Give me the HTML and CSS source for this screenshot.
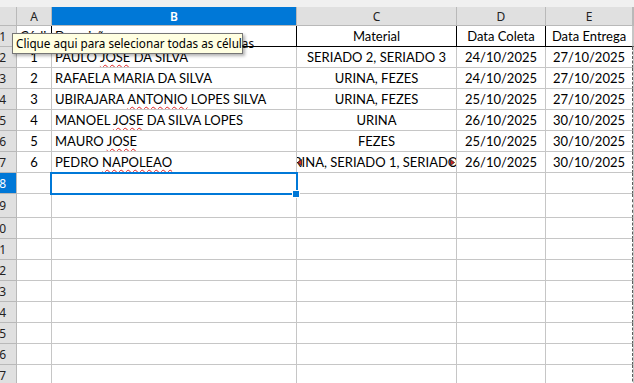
FILE: index.html
```html
<!DOCTYPE html>
<html lang="pt-BR">
<head>
  <meta charset="UTF-8">
  <title>Planilha - Coletas</title>
  <link rel="stylesheet" href="styles.css">
</head>
<body>
  <div class="sheet">
    <!-- faixa da barra de fórmulas -->
    <div class="strip"></div>

    <!-- Cabeçalho das colunas -->
    <div class="row head">
      <div class="cell corner"></div>
      <div class="cell col">A</div>
      <div class="cell col active">B</div>
      <div class="cell col">C</div>
      <div class="cell col">D</div>
      <div class="cell col">E</div>
      <div class="cell col"></div>
    </div>

    <!-- Linha 1: títulos -->
    <div class="row title">
      <div class="cell rh"><span>1</span></div>
      <div class="cell left"><span>Código</span></div>
      <div class="cell left"><span>Descrição</span></div>
      <div class="cell center"><span>Material</span></div>
      <div class="cell center"><span>Data Coleta</span></div>
      <div class="cell center"><span>Data Entrega</span></div>
      <div class="cell"></div>
    </div>

    <div class="row">
      <div class="cell rh"><span>2</span></div>
      <div class="cell center"><span>1</span></div>
      <div class="cell left"><span>PAULO <span class="typo">JOSE</span> DA SILVA</span></div>
      <div class="cell center"><span>SERIADO 2, SERIADO 3</span></div>
      <div class="cell center"><span>24/10/2025</span></div>
      <div class="cell center page"><span>27/10/2025</span></div>
      <div class="cell"></div>
    </div>
    <div class="row">
      <div class="cell rh"><span>3</span></div>
      <div class="cell center"><span>2</span></div>
      <div class="cell left"><span>RAFAELA MARIA DA SILVA</span></div>
      <div class="cell center"><span>URINA, FEZES</span></div>
      <div class="cell center"><span>24/10/2025</span></div>
      <div class="cell center page"><span>27/10/2025</span></div>
      <div class="cell"></div>
    </div>
    <div class="row">
      <div class="cell rh"><span>4</span></div>
      <div class="cell center"><span>3</span></div>
      <div class="cell left"><span>UBIRAJARA <span class="typo">ANTONIO</span> LOPES SILVA</span></div>
      <div class="cell center"><span>URINA, FEZES</span></div>
      <div class="cell center"><span>25/10/2025</span></div>
      <div class="cell center page"><span>27/10/2025</span></div>
      <div class="cell"></div>
    </div>
    <div class="row">
      <div class="cell rh"><span>5</span></div>
      <div class="cell center"><span>4</span></div>
      <div class="cell left"><span>MANOEL <span class="typo">JOSE</span> DA SILVA LOPES</span></div>
      <div class="cell center"><span>URINA</span></div>
      <div class="cell center"><span>26/10/2025</span></div>
      <div class="cell center page"><span>30/10/2025</span></div>
      <div class="cell"></div>
    </div>
    <div class="row">
      <div class="cell rh"><span>6</span></div>
      <div class="cell center"><span>5</span></div>
      <div class="cell left"><span>MAURO <span class="typo">JOSE</span></span></div>
      <div class="cell center"><span>FEZES</span></div>
      <div class="cell center"><span>25/10/2025</span></div>
      <div class="cell center page"><span>30/10/2025</span></div>
      <div class="cell"></div>
    </div>
    <div class="row">
      <div class="cell rh"><span>7</span></div>
      <div class="cell center"><span>6</span></div>
      <div class="cell left"><span>PEDRO <span class="typo">NAPOLEAO</span></span></div>
      <div class="cell center clipped">
        <span class="overflow">URINA, SERIADO 1, SERIADO 2</span>
        <svg class="arrow arrow-left" width="5" height="7" viewBox="0 0 5 7"><path d="M4.5 0.5 L0.5 3.5 L4.5 6.5 Z" fill="#d42020" stroke="#222" stroke-width="0.8"/></svg>
        <svg class="arrow arrow-right" width="5" height="7" viewBox="0 0 5 7"><path d="M0.5 0.5 L4.5 3.5 L0.5 6.5 Z" fill="#d42020" stroke="#222" stroke-width="0.8"/></svg>
      </div>
      <div class="cell center"><span>26/10/2025</span></div>
      <div class="cell center page"><span>30/10/2025</span></div>
      <div class="cell"></div>
    </div>
    <div class="row">
      <div class="cell rh active"><span>8</span></div>
      <div class="cell"></div>
      <div class="cell current"><div class="selection"><div class="handle"></div></div></div>
      <div class="cell"></div>
      <div class="cell"></div>
      <div class="cell page"></div>
      <div class="cell"></div>
    </div>
    <div class="row tall">
      <div class="cell rh"><span>9</span></div>
      <div class="cell"></div><div class="cell"></div><div class="cell"></div><div class="cell"></div><div class="cell page"></div><div class="cell"></div>
    </div>
    <div class="row">
      <div class="cell rh"><span>10</span></div>
      <div class="cell"></div><div class="cell"></div><div class="cell"></div><div class="cell"></div><div class="cell page"></div><div class="cell"></div>
    </div>
    <div class="row">
      <div class="cell rh"><span>11</span></div>
      <div class="cell"></div><div class="cell"></div><div class="cell"></div><div class="cell"></div><div class="cell page"></div><div class="cell"></div>
    </div>
    <div class="row">
      <div class="cell rh"><span>12</span></div>
      <div class="cell"></div><div class="cell"></div><div class="cell"></div><div class="cell"></div><div class="cell page"></div><div class="cell"></div>
    </div>
    <div class="row">
      <div class="cell rh"><span>13</span></div>
      <div class="cell"></div><div class="cell"></div><div class="cell"></div><div class="cell"></div><div class="cell page"></div><div class="cell"></div>
    </div>
    <div class="row">
      <div class="cell rh"><span>14</span></div>
      <div class="cell"></div><div class="cell"></div><div class="cell"></div><div class="cell"></div><div class="cell page"></div><div class="cell"></div>
    </div>
    <div class="row">
      <div class="cell rh"><span>15</span></div>
      <div class="cell"></div><div class="cell"></div><div class="cell"></div><div class="cell"></div><div class="cell page"></div><div class="cell"></div>
    </div>
    <div class="row">
      <div class="cell rh"><span>16</span></div>
      <div class="cell"></div><div class="cell"></div><div class="cell"></div><div class="cell"></div><div class="cell page"></div><div class="cell"></div>
    </div>
    <div class="row">
      <div class="cell rh"><span>17</span></div>
      <div class="cell"></div><div class="cell"></div><div class="cell"></div><div class="cell"></div><div class="cell page"></div><div class="cell"></div>
    </div>

    <!-- Dica do canto superior esquerdo -->
    <div class="tooltip">Clique aqui para selecionar todas as células</div>
  </div>
</body>
</html>
```

FILE: styles.css
```css
/* Reset */
* {
  margin: 0;
  padding: 0;
  box-sizing: border-box;
}
html, body {
  width: 100%;
  height: 100%;
  background: #fff;
  overflow: hidden;
}
/* Planilha */
.sheet {
  position: relative;
  font-family: 'Lato', 'Liberation Sans', sans-serif;
  font-size: 13px;
  color: #000;
}
.strip {
  height: 7px;
  background: #f0f0f0;
}
.row {
  display: grid;
  grid-template-columns: 17px 35px 245px 160px 89px 87px 1fr;
  height: 21px;
}
.row.tall {
  height: 24px;
}
.cell {
  position: relative;
  display: flex;
  align-items: flex-end;
  padding-bottom: 2px;
  overflow: hidden;
  white-space: nowrap;
  border-right: 1px solid #c6c6c6;
  border-bottom: 1px solid #c6c6c6;
  line-height: 15px;
}
.cell.left {
  padding-left: 3px;
}
.cell.center {
  justify-content: center;
}
.cell.page {
  border-right: 1px dashed #5e5e5e;
}
.cell.current {
  overflow: visible;
  z-index: 2;
}
/* Cabeçalhos */
.row.head {
  height: 19px;
}
.row.head .cell {
  background: #e0e0e0;
  border-color: #b9b9b9;
  justify-content: center;
  align-items: center;
  padding: 0;
  font-family: 'Noto Sans', sans-serif;
  font-size: 12px;
  color: #222;
}
.row.head .cell.active {
  background: #0078d7;
  color: #fff;
  font-weight: 600;
}
.cell.rh {
  background: #e0e0e0;
  border-color: #b9b9b9;
  justify-content: flex-end;
  align-items: center;
  padding: 0 10px 0 0;
  font-family: 'Noto Sans', sans-serif;
  font-size: 12px;
  color: #222;
}
.cell.rh.active {
  background: #0078d7;
  color: #fff;
}
.row.title .cell:not(.rh) {
  border-right-color: #000;
  border-bottom-color: #000;
}
.row.title .cell:nth-child(6),
.row.title .cell:last-child {
  border-right-color: #c6c6c6;
}
/* Correção ortográfica */
.typo {
  text-decoration: underline wavy #e02020;
  text-decoration-thickness: 1px;
  text-underline-offset: 2px;
}
/* Texto cortado na célula */
.arrow {
  position: absolute;
  top: 7px;
}
.arrow-left {
  left: 0;
}
.arrow-right {
  right: 1px;
}
/* Célula selecionada */
.selection {
  position: absolute;
  left: -2px;
  top: -1px;
  width: 248px;
  height: 23px;
  border: 2px solid #0078d7;
}
.handle {
  position: absolute;
  left: 241px;
  top: 17px;
  width: 6px;
  height: 6px;
  background: #0078d7;
  outline: 1px solid #fff;
}
/* Dica */
.tooltip {
  position: absolute;
  left: 12px;
  top: 33px;
  width: 231px;
  height: 21px;
  padding: 2px 0 0 3px;
  background: #ffffe1;
  border: 1px solid #767676;
  box-shadow: 2px 2px 3px rgba(0, 0, 0, 0.3);
  font-family: 'Noto Sans', sans-serif;
  font-size: 11.7px;
  line-height: 15px;
  color: #000;
  white-space: nowrap;
  z-index: 5;
}
```
